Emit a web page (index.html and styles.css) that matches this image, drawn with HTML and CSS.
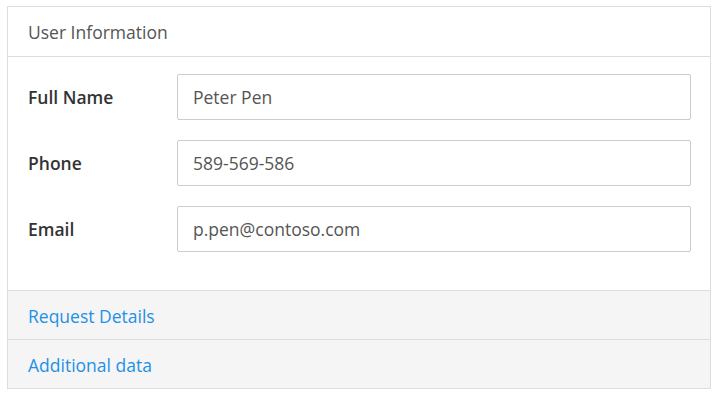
FILE: index.html
```html
<!DOCTYPE html>
<html>
<head>
<meta charset="utf-8">
<link rel="stylesheet" href="styles.css">
</head>
<body>
<div class="panel">
  <div class="panel-header">User Information</div>
  <div class="panel-body">
    <div class="form-row">
      <label class="form-label">Full Name</label>
      <div class="form-input">Peter Pen</div>
    </div>
    <div class="form-row">
      <label class="form-label">Phone</label>
      <div class="form-input">589-569-586</div>
    </div>
    <div class="form-row">
      <label class="form-label">Email</label>
      <div class="form-input">p.pen@contoso.com</div>
    </div>
  </div>
  <div class="section"><a class="section-link">Request Details</a></div>
  <div class="section"><a class="section-link">Additional data</a></div>
</div>
</body>
</html>
```
FILE: styles.css
```css
html, body {
  background: #fff;
}
body {
  margin: 6px 6px 0 7px;
  font-family: "Open Sans", "Noto Sans", sans-serif;
  color: #555;
}
.panel {
  width: 702px;
  border: 1px solid #ddd;
}
.panel-header {
  height: 49px;
  border-bottom: 1px solid #ddd;
  padding-left: 20px;
  display: flex;
  align-items: center;
  font-size: 17.5px;
  color: #555;
}
.panel-body {
  padding: 17px 19px 38px 20px;
  display: flex;
  flex-direction: column;
  gap: 20px;
}
.form-row {
  display: flex;
  align-items: center;
}
.form-label {
  width: 149px;
  flex: none;
  font-weight: 600;
  font-size: 17.5px;
  color: #333;
}
.form-input {
  flex: 1;
  height: 44px;
  border: 1px solid #ccc;
  border-radius: 2px;
  padding-left: 15px;
  display: flex;
  align-items: center;
  font-size: 17.5px;
  color: #555;
}
.section {
  box-sizing: border-box;
  height: 49px;
  background: #f5f5f5;
  border-top: 1px solid #ddd;
  padding-left: 20px;
  padding-top: 1px;
  display: flex;
  align-items: center;
}
.section-link {
  color: #1e90e8;
  font-size: 17.5px;
  text-decoration: none;
}
```
